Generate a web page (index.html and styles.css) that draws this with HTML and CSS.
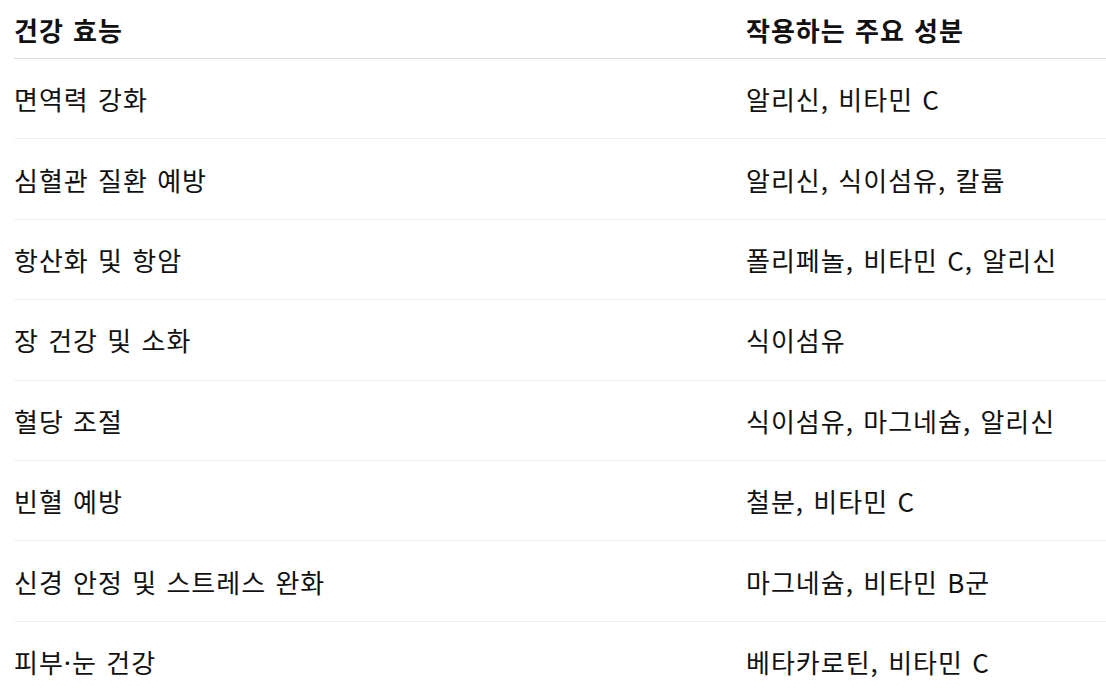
FILE: index.html
```html
<!DOCTYPE html>
<html lang="ko">
<head>
<meta charset="utf-8">
<link rel="stylesheet" href="styles.css">
</head>
<body>
<table class="tbl">
  <thead>
    <tr><th class="c1">건강 효능</th><th class="c2">작용하는 주요 성분</th></tr>
  </thead>
  <tbody>
    <tr><td>면역력 강화</td><td>알리신, 비타민 C</td></tr>
    <tr><td>심혈관 질환 예방</td><td>알리신, 식이섬유, 칼륨</td></tr>
    <tr><td>항산화 및 항암</td><td>폴리페놀, 비타민 C, 알리신</td></tr>
    <tr><td>장 건강 및 소화</td><td>식이섬유</td></tr>
    <tr><td>혈당 조절</td><td>식이섬유, 마그네슘, 알리신</td></tr>
    <tr><td>빈혈 예방</td><td>철분, 비타민 C</td></tr>
    <tr><td>신경 안정 및 스트레스 완화</td><td>마그네슘, 비타민 B군</td></tr>
    <tr><td>피부·눈 건강</td><td>베타카로틴, 비타민 C</td></tr>
  </tbody>
</table>
</body>
</html>
```
FILE: styles.css
```css
html, body { margin: 0; padding: 0; background: #fff; }
body {
  font-family: "Noto Sans CJK KR", "Noto Sans", sans-serif;
  color: #111;
  font-size: 26px;
  letter-spacing: 1px;
  word-spacing: 1px;
  padding-left: 14px;
  overflow: hidden;
}
.tbl {
  border-collapse: collapse;
  width: 1092px;
  table-layout: fixed;
}
.tbl th {
  text-align: left;
  font-weight: 700;
  height: 58px;
  padding: 0;
  border-bottom: 1px solid #dcdcdc;
  vertical-align: middle;
}
.tbl .c1 { width: 732px; }
.tbl td {
  padding: 0;
  height: 79.4px;
  border-bottom: 1px solid #efefef;
  vertical-align: middle;
  white-space: nowrap;
}
```
